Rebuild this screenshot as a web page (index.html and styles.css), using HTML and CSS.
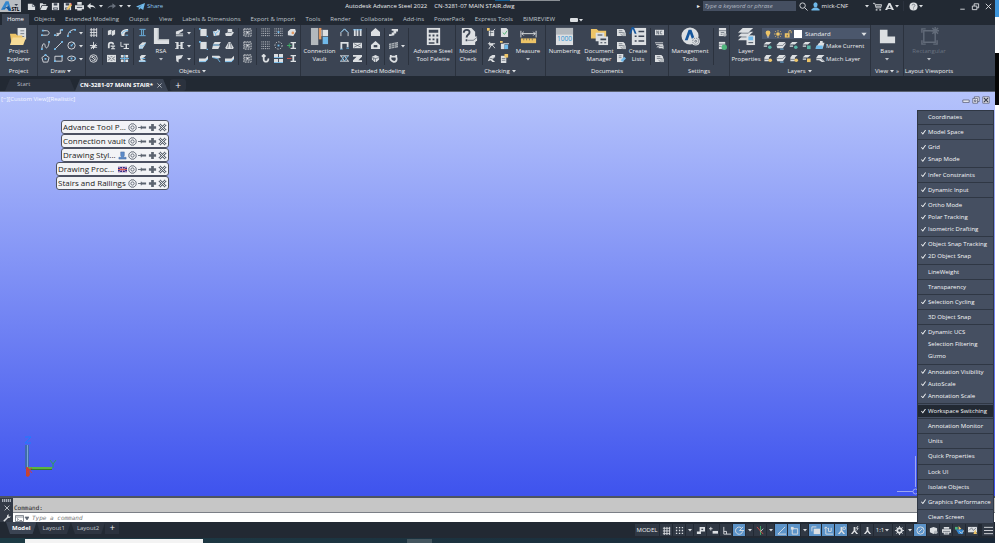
FILE: index.html
```html
<!DOCTYPE html>
<html lang="en">
<head>
    <meta charset="UTF-8">
    <meta name="viewport" content="width=device-width, initial-scale=1.0">
    <title>Autodesk Advance Steel 2022 - CN-3281-07 MAIN STAIR.dwg</title>
    <link rel="stylesheet" href="styles.css">
</head>
<body>
    <!-- Icon library -->
    <svg class="defs" aria-hidden="true">
        <symbol id="caret" viewBox="0 0 6 6"><path class="w" d="M1 2h4L3 4.500z"/></symbol>
        <symbol id="new" viewBox="0 0 10 10"><path class="w" d="M1 2h5l3 3v4H1z"/><path class="k" d="M6 2v3h3"/></symbol>
        <symbol id="open" viewBox="0 0 10 10"><path class="w" d="M1 1.500h3l1 1h3v1H3L1 8z"/><path class="w" d="M3.500 4.500H10L8 9H1.500z"/></symbol>
        <symbol id="save" viewBox="0 0 10 10"><path class="w" d="M1 1h8v8H1z"/><path class="d" d="M3 1.500h4v2.500H3zM2.500 6h5v2.500h-5z"/><path class="w" d="M3.500 7h3v1h-3z"/></symbol>
        <symbol id="saveas" viewBox="0 0 10 10"><use href="#save"/><path class="y" d="M4 9l1-3 3-4 2 1.500L6.500 8z"/><path class="r" d="M8 2l1-1 1 1.500-.5 1z"/></symbol>
        <symbol id="print" viewBox="0 0 10 10"><path class="w" d="M2.500 0h5v3h-5zM0 3.500h10V8H0z"/><path class="d" d="M2 5.500h6v1H2z"/><path class="w" d="M2.500 7h5v2.500h-5z"/></symbol>
        <symbol id="undo" viewBox="0 0 10 10"><path class="w" d="M0 4.500L4 1v2.200c3 0 5 1.500 5.500 4.300C8 5.700 6.500 5.500 4 5.600V8z"/></symbol>
        <symbol id="redo" viewBox="0 0 10 10"><path class="g" d="M10 4.500L6 1.500v2C3 3.500 1 5 .5 7.500 2 5.700 3.500 5.300 6 5.400v2z"/></symbol>
        <symbol id="share" viewBox="0 0 10 10"><path class="b" d="M0 5l10-4-2 8-3-2-2 2V6.500L7 3 2.500 6z"/></symbol>
        <symbol id="search" viewBox="0 0 10 10"><circle class="lw" cx="4" cy="4" r="3"/><path class="lw" d="M6.200 6.200L9.500 9.500"/></symbol>
        <symbol id="user" viewBox="0 0 10 10"><ellipse class="b" cx="5" cy="3" rx="2.300" ry="2.800"/><path class="b" d="M.5 9.500V8l3-2h3l3 2v1.500z"/></symbol>
        <symbol id="cart" viewBox="0 0 10 10"><path class="lw" d="M0 1.500h2l1.500 5H8.500L9.500 3H3M3.500 4.700h5"/><path class="w" d="M3 8h2v1.500H3zM7 8h2v1.500H7z"/></symbol>
        <symbol id="adesk" viewBox="0 0 10 10"><path class="w" d="M4 1h2l4 8H7.500L5 3.500 2.500 9H0z"/><path class="w" d="M3 6.500h4v1.200H3z"/></symbol>
        <symbol id="help" viewBox="0 0 10 10"><circle class="w" cx="5" cy="5" r="4.500"/><path class="ld" d="M3.400 3.800C3.500 2 6.800 2 6.600 4 6.500 5 5 5 5 6.300M5 7.200v1"/></symbol>
        <symbol id="min" viewBox="0 0 10 10"><path class="lw" d="M2.500 8h5"/></symbol>
        <symbol id="restore" viewBox="0 0 10 10"><path class="lw" d="M1.500 4.500h5v4h-5zM3.500 4.500V2h5v4.500h-2"/></symbol>
        <symbol id="close" viewBox="0 0 10 10"><path class="lw" d="M2 2l6 6M8 2L2 8"/></symbol>
        <symbol id="vmin" viewBox="0 0 10 10"><path class="vb" d="M1 5h8v3H1z"/></symbol>
        <symbol id="vrestore" viewBox="0 0 10 10"><path class="vb" d="M3 1h6v6H3z"/><path class="vb" d="M1 3h6v6H1z"/><path class="vb" d="M3 5h2v2H3z"/></symbol>
        <symbol id="vclose" viewBox="0 0 10 10"><path class="vb" d="M1 1h8v8H1z"/><path class="vx" d="M2.500 2.500l5 5M7.500 2.500l-5 5"/></symbol>

        <!-- Draw -->
        <symbol id="pline" viewBox="0 0 10 10"><path class="lw" d="M1 8h5c4 0 4-5 0-5H2"/><path class="b" d="M0 7h2v2H0zM1 2h2v2H1z"/></symbol>
        <symbol id="line3d" viewBox="0 0 10 10"><path class="lw" d="M1 8h4l-2-2h4V2h2"/><path class="b" d="M0 7h2v2H0zM8 1h2v2H8z"/><path class="lw" d="M3 9l5-4"/></symbol>
        <symbol id="arc" viewBox="0 0 10 10"><path class="lw" d="M1 9C1 5 4 2 9 1.500"/><path class="b" d="M0 8h2v2H0zM8 1h2v2H8zM2.500 3.500h2v2h-2z"/></symbol>
        <symbol id="spline" viewBox="0 0 10 10"><path class="lw" d="M1 9C1 3 4 1 4.500 5S8 9 9 1"/><path class="b" d="M0 8h2v2H0zM8 0h2v2H8z"/></symbol>
        <symbol id="line" viewBox="0 0 10 10"><path class="lw" d="M1 9l8-8"/><path class="b" d="M0 8h2v2H0zM8 0h2v2H8z"/></symbol>
        <symbol id="circle" viewBox="0 0 10 10"><circle class="lw" cx="5" cy="5" r="4"/><path class="lb" d="M5 5l3-3"/><path class="b" d="M4 4h2v2H4z"/></symbol>
        <symbol id="polygon" viewBox="0 0 10 10"><path class="lw" d="M5 1l4 3-1.500 5h-5L1 4z"/><path class="b" d="M4 4.500h2v2H4zM4 0h2v2H4z"/></symbol>
        <symbol id="rect" viewBox="0 0 10 10"><path class="lw" d="M1 2.500h8v5.500H1z"/><path class="b" d="M0 7h2v2H0zM8 1.500h2v2H8z"/></symbol>
        <symbol id="ellipse" viewBox="0 0 10 10"><ellipse class="lw" cx="5" cy="5" rx="4.300" ry="2.700"/><path class="b" d="M4 4h2v2H4zM8.500 4H10v2H8.500z"/></symbol>

        <!-- Objects -->
        <symbol id="gridlines" viewBox="0 0 10 10"><path class="lw" d="M1 2h8M1 5h8M1 8h8M2.500 0v10M5.500 0v10M8.500 0v10"/></symbol>
        <symbol id="level" viewBox="0 0 10 10"><path class="lw" d="M1 5h8M5 1v8M2 9l6-6M2 7h7"/><path class="w" d="M3 5h5L5 9z"/></symbol>
        <symbol id="compass" viewBox="0 0 10 10"><circle class="lw" cx="5" cy="5" r="4.200"/><path class="lw" d="M3 3l4 4M3 6c1 2 4 2 4-1S3 2 3 4"/></symbol>
        <symbol id="solid" viewBox="0 0 10 10"><path class="w" d="M1 3l3-1 2 1 3-1v5L6 9 5 7 1 8z"/><path class="ld" d="M5 3v4"/></symbol>
        <symbol id="curved" viewBox="0 0 10 10"><path class="w" d="M1 6c0-3 3-5 8-5v3C6 4 5 5 5 9H2z"/><path class="lb" d="M2 6.500c1-2.500 3-3.500 7-3.800M6 8h3"/></symbol>
        <symbol id="bend" viewBox="0 0 10 10"><path class="lw2" d="M2 8V4c0-3 5-3 5 0"/><path class="w" d="M4 5h5v1.300H7.300V8H9v1.200H4.500V8H6V6.300H4z"/></symbol>
        <symbol id="ibranch" viewBox="0 0 10 10"><path class="lw" d="M1 1v5h3"/><path class="w" d="M4 3h6v1.300H7.800v3.400H10V9H4V7.700h2.200V4.300H4z"/></symbol>
        <symbol id="joinA" viewBox="0 0 10 10"><path class="w" d="M0 1h10v8H0z"/><path class="ld" d="M1 3l3 2-3 2M9 3L6 5l3 2M4 3h2M4 7h2"/></symbol>
        <symbol id="joinB" viewBox="0 0 10 10"><path class="w" d="M1 1h3v3H1zM6 1h3v3H6zM1 6h3v3H1zM6 6h3v3H6z"/><path class="lb" d="M0 5h10M5 1v8"/></symbol>
        <symbol id="ibeam" viewBox="0 0 10 10"><path class="lb" d="M1.500 1.500h7M1.500 8.500h7M4 2v6M6 2v6"/></symbol>
        <symbol id="beam" viewBox="0 0 10 10"><path class="w" d="M1 5l4-3.500h4L8 4 5 8.500H1z"/><path class="lb" d="M2 5.500h4l2.500-3M2 8h3"/></symbol>
        <symbol id="beamc" viewBox="0 0 10 10"><path class="w" d="M2 3l2-2h5L7 3.500h-.5L5 6l3 1v2H1V7h2z"/><path class="lb" d="M1 8h8M4 5h4"/></symbol>
        <symbol id="rsa" viewBox="0 0 20 20"><path class="w" d="M2 1h5v12h11v5H2z"/><path class="gr" d="M6 1h1v12h11v1H6z"/></symbol>
        <symbol id="taper" viewBox="0 0 10 10"><path class="w" d="M1 4l8-3v2L4 6h5v1.300H1zM1 8h8v1.300H1z"/></symbol>
        <symbol id="hbeam" viewBox="0 0 10 10"><path class="w" d="M0 1h4v8H0V8h1.500V2H0zM6 1h4v1H8.500v6H10v1H6z"/><path class="lw" d="M3 5h4"/></symbol>
        <symbol id="folded" viewBox="0 0 10 10"><path class="w" d="M1 2l8-1-2 4-3 1v3.500L1.500 8z"/></symbol>
        <symbol id="plate" viewBox="0 0 10 10"><path class="w" d="M1.500 1h7v8h-7z"/><path class="b" d="M0 0h2v2H0zM8.500 8.500H10V10H8.500z"/></symbol>
        <symbol id="platep" viewBox="0 0 10 10"><path class="w" d="M1 4l4-1 1-2 3 2-1 5-6 1z"/><path class="lb" d="M1 4l3 2 5-4M4 6v3"/></symbol>
        <symbol id="fold" viewBox="0 0 10 10"><path class="w" d="M3 1h5v3l2 1-3 4H1L0 6l3-1z"/><path class="ld" d="M3 5h4l1-1"/></symbol>
        <symbol id="plates" viewBox="0 0 10 10"><path class="w" d="M3 1h7L8 4H1zM1 5h8L7 9H0z"/><path class="lb" d="M1 4.500h7"/></symbol>
        <symbol id="cone" viewBox="0 0 10 10"><path class="w" d="M4 1h2l4 7H0zM1 8h8v1H1z"/><path class="ld" d="M4.500 2L3 8M6 2l1 6"/></symbol>
        <symbol id="slab" viewBox="0 0 10 10"><path class="w" d="M0 5h7l3-3v4L7 9H0z"/><path class="lb" d="M0 8.500h7l3-3"/></symbol>
        <symbol id="bendplate" viewBox="0 0 10 10"><path class="w" d="M0 2h8l2 2-3 1-7-1z"/><path class="lb" d="M1 4l5 1 3 4"/></symbol>
        <symbol id="checker" viewBox="0 0 10 10"><path class="lw" d="M1 1h8v8H1z" stroke-dasharray="2 1"/><path class="lw" d="M1 4h8M1 6.500h8M3.500 1v8M6.500 1v8" stroke-dasharray="1 1"/><path class="w" d="M4 4h2v2H4z"/></symbol>
        <symbol id="dots" viewBox="0 0 10 10"><path class="lw" d="M.5 1h9M.5 3.500h9M.5 6h9M.5 8.500h9" stroke-dasharray="1 1"/></symbol>
        <symbol id="dotsb" viewBox="0 0 10 10"><use href="#dots"/><path class="b" d="M4 3.500h2v2H4z"/></symbol>
        <symbol id="ring" viewBox="0 0 10 10"><circle class="lw" cx="5" cy="5" r="4" stroke-dasharray="1.500 1.500"/><path class="b" d="M4 4h2v2H4z"/></symbol>
        <symbol id="hook" viewBox="0 0 10 10"><path class="lw2" d="M3 1v5c0 4 6 3 5-1M1 3l2-2 2 2"/></symbol>
        <symbol id="tiles" viewBox="0 0 10 10"><path class="w" d="M0 0h4.500v4.500H0zM5.500 0H10v4.500H5.500zM0 5.500h4.500V10H0zM5.500 5.500H10V10H5.500z"/><path class="lb" d="M0 4h10M0 9.500h10"/></symbol>
        <symbol id="weld" viewBox="0 0 10 10"><path class="w" d="M1 4l3-3h5l1 3-3 5-6-1z"/><circle class="o" cx="6.500" cy="5.500" r="1.500"/></symbol>
        <symbol id="addcon" viewBox="0 0 10 10"><path class="w" d="M4 1h6v1.500H8v5h2V9H4V7.500h2v-5H4z"/><path class="lgn" d="M0 5h5M2.500 2.500v5"/></symbol>
        <symbol id="remcon" viewBox="0 0 10 10"><path class="w" d="M4 1h6v1.500H8v5h2V9H4V7.500h2v-5H4z"/><path class="lr" d="M0 5h5"/></symbol>

        <!-- Extended modeling -->
        <symbol id="vault" viewBox="0 0 20 20"><path class="gr" d="M1 1h8v18H1z"/><path class="o" d="M9 1h3v12H9z"/><path class="w" d="M12 3h7v7h-7z"/><path class="b" d="M13 10h6v8h-6z"/><path class="ld" d="M9 1v18M12 10h7M13 3v15"/></symbol>
        <symbol id="portal" viewBox="0 0 10 10"><path class="lw" d="M1 9V5l4-4 4 4v4"/><path class="lb" d="M1 5l4-4 4 4"/></symbol>
        <symbol id="cols" viewBox="0 0 10 10"><path class="lw2" d="M2 1v8M5 1v8M8.500 1v8"/><path class="lb" d="M0 2h10"/></symbol>
        <symbol id="frame" viewBox="0 0 10 10"><path class="lw2" d="M1.500 9V2h7v5"/><path class="lb" d="M0 9h3M7 8h3"/></symbol>
        <symbol id="xbox" viewBox="0 0 10 10"><path class="w" d="M0 2h10v6H0z"/><path class="ld" d="M1 3l8 4M9 3L1 7"/></symbol>
        <symbol id="truss" viewBox="0 0 10 10"><path class="lw" d="M0 2h10M0 8h10M1 2l4 6M5 2l4 6"/><path class="lb" d="M5 2L1 8M9 2L5 8"/></symbol>
        <symbol id="zee" viewBox="0 0 10 10"><path class="w" d="M0 1h10v2L6 7h4v2H0V7l4-4H0z"/></symbol>
        <symbol id="house" viewBox="0 0 10 10"><path class="w" d="M5 0l5 4.500V9H0V4.500z"/></symbol>
        <symbol id="house2" viewBox="0 0 10 10"><use href="#house"/><path class="d" d="M3 4.500h4V7H3z"/></symbol>
        <symbol id="cage" viewBox="0 0 10 10"><path class="w" d="M1 3l4-2 4 2v3L6 9H4L1 6z"/><path class="ld" d="M1 4l4 1 4-1M5 5v4M3 4v3"/></symbol>
        <symbol id="stair" viewBox="0 0 10 10"><path class="w" d="M3 1h7v3H8v2H6v2L2 9H0V7h3V5h2V3H3z"/></symbol>
        <symbol id="railing" viewBox="0 0 10 10"><path class="gr" d="M0 3l10-2v6L0 9z"/><path class="ld" d="M0 5l10-2M0 7l10-2M3 2v7M6 2v6"/></symbol>
        <symbol id="handrail" viewBox="0 0 10 10"><path class="lw2" d="M2 1v2C-1 9 11 12 8 3V1M2 3h6"/></symbol>
        <symbol id="calc" viewBox="0 0 20 20"><path class="w" d="M3 1h14v18H3z"/><path class="d" d="M5 3h10v3H5zM5 8h2v2H5zM9 8h2v2H9zM13 8h2v2h-2zM5 12h2v2H5zM9 12h2v2H9zM13 12h2v5h-2zM5 16h6v1.500H5z"/></symbol>

        <!-- Checking -->
        <symbol id="mcheck" viewBox="0 0 20 20"><path class="w" d="M3 1h10l4 4v14H3z"/><path class="ld2" d="M5 6c0-4 7-4 6 0 0 2-3 2-3 5M8 13v2"/><path class="w" d="M9 13l6-3h4v4l-5 5h-5z"/><path class="ld" d="M9 14h6l4-3"/></symbol>
        <symbol id="clash" viewBox="0 0 10 10"><path class="w" d="M2 3h6v6H2z"/><path class="y" d="M0 0h3v3H0z"/><path class="ld" d="M3 5h4M4 3v6"/><path class="lw" d="M7 3l2-2"/></symbol>
        <symbol id="okdoc" viewBox="0 0 10 10"><path class="w" d="M1 0h6l2 2v8H1z"/><path class="lgn" d="M3 5l2 2 3-4"/></symbol>
        <symbol id="cog" viewBox="0 0 10 10"><path class="lw" d="M1 3h8M3 1v4M6 3L2 9M6 5l3 3"/><path class="w" d="M3 3h4v2H3z"/></symbol>
        <symbol id="steelb" viewBox="0 0 10 10"><path class="w" d="M1 3h4v6H1z"/><path class="b" d="M5 4h4v5H5z"/><path class="y" d="M0 0h3v2H0z"/><path class="lw" d="M4 3h6"/></symbol>
        <symbol id="tape" viewBox="0 0 10 10"><path class="w" d="M3 3l3-2h3v3L6 6l3 3H6L4 7 1 8z"/><path class="ld" d="M3 5h3M6 6L9 3"/></symbol>
        <symbol id="note" viewBox="0 0 10 10"><path class="w" d="M1 2h6v8H1z"/><path class="y" d="M5 0h4v4H5z"/><path class="ld" d="M2 5h4M2 7h4"/></symbol>
        <symbol id="measure" viewBox="0 0 20 20"><path class="lw" d="M2 4v7M18 4v7M3 7h14M5 5L3 7l2 2M15 5l2 2-2 2"/><path class="y" d="M2 12h16v5H2z"/><path class="ld" d="M5 12v2M8 12v2M11 12v2M14 12v2"/></symbol>

        <!-- Documents, settings -->
        <symbol id="docmgr" viewBox="0 0 20 20"><path class="y" d="M1 2h6l2 2h8v8H1z"/><path class="w" d="M6 6h9v9H6z"/><path class="w" d="M9 10h10v9H9z"/><path class="d" d="M8 8h5v1H8zM11 12h6v2h-6zM11 16h2v1h-2zM15 16h2v1h-2z"/></symbol>
        <symbol id="sheet" viewBox="0 0 10 10"><path class="w" d="M0 1h7l2 2v6H0z"/><path class="ld" d="M2 3h4M2 5h6M4 7l3 2"/><path class="gr" d="M6 5h4v4H6z"/></symbol>
        <symbol id="sheetp" viewBox="0 0 10 10"><path class="w" d="M0 0h7v9H0z"/><path class="ld" d="M2 2h3M2 4h3"/><path class="b" d="M4 7l4-4 2 2-4 4z"/></symbol>
        <symbol id="list" viewBox="0 0 20 20"><path class="w" d="M3 1h15v18H3z"/><path class="d" d="M10 4h6v1.500h-6zM10 9h6v1.500h-6zM10 14h6v1.500h-6zM6 9h2v1.500H6zM6 14h2v1.500H6z"/><path class="nb" d="M3 0h2l3 7H6L4 2 2 7H0z"/></symbol>
        <symbol id="nc" viewBox="0 0 10 10"><path class="w" d="M0 2h10v6H0z"/><path class="ld" d="M2 7V3l2 4V3M8 3.500H6v3h2"/></symbol>
        <symbol id="dstv" viewBox="0 0 10 10"><path class="lw" d="M0 2h9M1 4h8M2 7l3-2h4v4"/><path class="w" d="M4 6h5v2H4z"/></symbol>
        <symbol id="mgmt" viewBox="0 0 20 20"><circle class="w" cx="9.500" cy="9.500" r="9"/><path class="nb" d="M8 3h3l4 11h-3L9.500 7 7 14H4z"/><circle class="w" cx="15.500" cy="15" r="4.500"/><circle class="ld" cx="15.500" cy="15" r="3.200" stroke-dasharray="1.500 1"/><circle class="ld" cx="15.500" cy="15" r="1"/></symbol>
        <symbol id="tbl" viewBox="0 0 10 10"><path class="w" d="M1 0h8v9H1z"/><path class="ld" d="M1 3h8M3 5h4M3 7h2"/><circle class="gr" cx="7.500" cy="7.500" r="2"/></symbol>
        <symbol id="dbsync" viewBox="0 0 10 10"><path class="w" d="M1 1h7v8H1z"/><path class="ld" d="M1 3.500h7M1 6h3"/><circle class="gn" cx="7" cy="7" r="3"/></symbol>

        <!-- Layers -->
        <symbol id="layers" viewBox="0 0 20 20"><path class="w" d="M6 1h11l-5 5H1zM6 5h11l-5 5H1zM6 9h11l-5 5H1z"/><path class="ld" d="M1 6.500h11l4-4M1 10.500h11l4-4"/><path class="w" d="M10 9h9v10h-9z"/><path class="b" d="M12 10h5v4h-5z"/><path class="d" d="M12 16h5v1h-5z"/></symbol>
        <symbol id="ly" viewBox="0 0 10 10"><path class="w" d="M3 1h6L6 4H0zM0 5h4v1.500H0z"/></symbol>
        <symbol id="lya" viewBox="0 0 10 10"><use href="#ly"/><circle class="t" cx="7" cy="7" r="2"/></symbol>
        <symbol id="lyb" viewBox="0 0 10 10"><path class="w" d="M3 1h7L7 4.500H0zM0 5h7l3-3v2L7 8H1z"/><path class="lb" d="M4 9h4"/></symbol>
        <symbol id="lyc" viewBox="0 0 10 10"><use href="#ly"/><path class="t" d="M5 5h4v4H5z"/></symbol>
        <symbol id="lyd" viewBox="0 0 10 10"><path class="w" d="M3 1h6L6 4v4H1V4z"/><path class="ld" d="M1 6h5"/><circle class="y" cx="7.500" cy="7" r="2"/></symbol>
        <symbol id="lye" viewBox="0 0 10 10"><use href="#ly"/><path class="y" d="M5 5h4v4H5z"/></symbol>
        <symbol id="lyf" viewBox="0 0 10 10"><path class="w" d="M4 2h6L8 8H0z"/><path class="b" d="M1 5h7v4H0z"/><path class="w" d="M5 0h3v3H5z"/></symbol>
        <symbol id="lyg" viewBox="0 0 10 10"><path class="w" d="M3 1h7L7 4v1l3 3v1H7L4 7H1V4z"/><path class="ld" d="M1 5h5l3 3"/></symbol>
        <symbol id="bulb" viewBox="0 0 10 10"><circle class="y" cx="5" cy="3.500" r="3"/><path class="y" d="M3.500 5h3v3h-3z"/><path class="w" d="M4 8h2v1.500H4z"/></symbol>
        <symbol id="sun" viewBox="0 0 10 10"><circle class="y" cx="5" cy="5" r="2.300"/><path class="ly" d="M5 0v2M5 8v2M0 5h2M8 5h2M1.500 1.500l1 1M7.500 7.500l1 1M8.500 1.500l-1 1M1.500 8.500l1-1"/></symbol>
        <symbol id="lock" viewBox="0 0 10 10"><path class="y" d="M1 4h6v5.500H1z"/><path class="ly" d="M6 4V2c0-2 3-2 3 0v2"/><path class="d" d="M3.500 6h1v2h-1z"/></symbol>
        <symbol id="base" viewBox="0 0 20 20"><path class="w" d="M2 3h8v7h8v7H2z"/></symbol>
        <symbol id="vport" viewBox="0 0 20 20"><path class="lm" d="M4 4h12v12H4zM2 6V2h4M2 14v4h4M14 18h4v-4"/><path class="lm" d="M16 0v8M12 4h8M13 1l6 6M19 1l-6 6"/></symbol>
        <symbol id="explorer" viewBox="0 0 20 20"><path class="w" d="M9 1h9v12H9z"/><path class="ld" d="M12 4h4M12 7h4M12 10h4"/><path class="y" d="M1 7h6l2 2h5v10H3z"/><path class="yl" d="M4 11h14l-3 8H1z"/></symbol>

        <!-- Palettes -->
        <symbol id="gear" viewBox="0 0 10 10"><path class="lg" d="M3.300 1h3.400L9 3.300v3.400L6.700 9H3.300L1 6.700V3.300z"/><circle class="lg" cx="5" cy="5" r="1.800"/></symbol>
        <symbol id="pin" viewBox="0 0 10 10"><path class="lg" d="M0 5h4"/><path class="sg" d="M3 3h1.200v1H9v2H4.200v1H3z"/></symbol>
        <symbol id="plus" viewBox="0 0 10 10"><path class="sg" d="M3.500 1h3v2.500H9v3H6.500V9h-3V6.500H1v-3h2.500z"/></symbol>
        <symbol id="cross" viewBox="0 0 10 10"><path class="lg2" d="M1.500 1.500l7 7M8.500 1.500l-7 7"/><path class="lwt" d="M1.500 1.500l7 7M8.500 1.500l-7 7"/></symbol>
        <symbol id="stamp" viewBox="0 0 10 10"><path class="stamp" d="M3 1h4v4L6 7h3v2H1V7h3L3 5z"/></symbol>
        <symbol id="flag" viewBox="0 0 10 10"><path class="nb2" d="M0 2h10v6H0z"/><path class="lpk" d="M0 2l10 6M10 2L0 8M0 5h10M5 2v6"/><path class="lr" d="M0 5h10"/></symbol>

        <!-- Status bar -->
        <symbol id="sgrid" viewBox="0 0 10 10"><path class="lw" d="M1 2.500h8M1 5.500h8M1 8.500h8M2.500 1v9M5.500 1v9M8.500 1v9"/></symbol>
        <symbol id="ssnap" viewBox="0 0 10 10"><path class="w" d="M1 1h1.500v1.500H1zM4.300 1h1.500v1.500H4.300zM7.500 1H9v1.500H7.500zM1 4.300h1.500v1.500H1zM4.300 4.300h1.500v1.500H4.300zM7.500 4.300H9v1.500H7.500zM1 7.500h1.500V9H1zM4.300 7.500h1.500V9H4.300zM7.500 7.500H9V9H7.500z"/></symbol>
        <symbol id="sinfer" viewBox="0 0 10 10"><path class="w" d="M4 1h6v5H5.500v3H1V6h3z"/><path class="d" d="M6 3h2v1.500H6z"/></symbol>
        <symbol id="sdyn" viewBox="0 0 10 10"><path class="lw" d="M0 3h4M2 1v4"/><path class="w" d="M4 5.500h6v3H4z"/></symbol>
        <symbol id="sortho" viewBox="0 0 10 10"><path class="lw" d="M2 1v8h8M2 6h3v3"/></symbol>
        <symbol id="spolar" viewBox="0 0 10 10"><path class="lw" d="M8.500 6A4 4 0 1 1 7 2M5 5l4-4M5 5h5"/></symbol>
        <symbol id="siso" viewBox="0 0 10 10"><path class="lgn" d="M5 0v10"/><path class="lr" d="M1 1l7 8"/><path class="lw" d="M8 3L5 6"/></symbol>
        <symbol id="strack" viewBox="0 0 10 10"><path class="lw" d="M9 1L1 9h9"/></symbol>
        <symbol id="sosnap" viewBox="0 0 10 10"><path class="lw" d="M2.500 3h6v6h-6z"/><path class="w" d="M1 1h3v3H1z"/></symbol>
        <symbol id="scycle" viewBox="0 0 10 10"><path class="w" d="M3 3h7v6H3z"/><path class="lw" d="M1 6V1h5"/></symbol>
        <symbol id="sducs" viewBox="0 0 10 10"><path class="lw" d="M2 1v8h8M0 3l2-2 2 2M5 2v4h3V2"/></symbol>
        <symbol id="sanno" viewBox="0 0 10 10"><path class="w" d="M4 1h2v4l3 4H7L5 6.500 3 9H1l3-4z"/></symbol>
        <symbol id="sannov" viewBox="0 0 10 10"><use href="#sanno"/><circle class="lw" cx="8" cy="2.500" r="1.500"/></symbol>
        <symbol id="sannoa" viewBox="0 0 10 10"><use href="#sanno"/><path class="lw" d="M9 0L7 2.500h2L7.500 5"/></symbol>
        <symbol id="sgear" viewBox="0 0 10 10"><circle class="lw2" cx="5" cy="5" r="2.500"/><path class="lw" d="M5 0v2M5 8v2M0 5h2M8 5h2M1.500 1.500l1.500 1.500M7 7l1.500 1.500M8.500 1.500L7 3M1.500 8.500L3 7"/></symbol>
        <symbol id="sperf" viewBox="0 0 10 10"><circle class="lw" cx="5" cy="5" r="4"/><path class="lw" d="M3 7l4-4"/></symbol>
        <symbol id="scube" viewBox="0 0 10 10"><path class="w" d="M1 2.500L5 1l4 1.500v4L5 9 1 7z"/><circle class="gr" cx="7.500" cy="7" r="2"/></symbol>
        <symbol id="splot" viewBox="0 0 10 10"><path class="w" d="M2 1h6v2H2zM0 3.500h10v4H0zM2 7h6v2.500H2z"/><path class="ld" d="M1 6h8M3 8h4"/></symbol>
        <symbol id="smap" viewBox="0 0 10 10"><path class="gn" d="M0 1h3v3H0z"/><path class="y" d="M4 0l3 3-3 2z"/><path class="nb3" d="M1 4h8v5H4z"/><path class="lw" d="M5 6l2 2 3-3"/></symbol>
        <symbol id="sunit" viewBox="0 0 10 10"><path class="w" d="M0 1h10v6H0z"/><path class="ld" d="M1 5l3-3 2 3 3-3"/><path class="y" d="M8 4l2 5H6z"/></symbol>
        <symbol id="smenu" viewBox="0 0 10 10"><path class="lw" d="M0 1.500h10M0 5h10M0 8.500h10"/></symbol>
        <symbol id="wrench" viewBox="0 0 10 10"><path class="lw2" d="M1 9l5-5"/><path class="w" d="M5 5V2l2-2v3h3L8 5z"/></symbol>
    </svg>

    <div class="app">
        <header class="titlebar">
            <button class="app-menu" aria-label="Application menu"><svg viewBox="0 0 22 12"><path class="nb3" d="M6 1h3l3 10H9.500L7.500 4 5 10H1z"/><path class="nb" d="M1 10l8-4 3 5H9L7 8z"/><text x="12" y="11">STL</text><path class="d" d="M15 4h4l-2 2z"/></svg></button>
            <nav class="quick">
                <button aria-label="New"><svg><use href="#new"/></svg></button>
                <button aria-label="Open"><svg><use href="#open"/></svg></button>
                <button aria-label="Save"><svg><use href="#save"/></svg></button>
                <button aria-label="Save as"><svg><use href="#saveas"/></svg></button>
                <button aria-label="Plot"><svg><use href="#print"/></svg></button>
                <button aria-label="Undo"><svg><use href="#undo"/></svg></button>
                <button class="drop" aria-label="Undo list"><svg><use href="#caret"/></svg></button>
                <button aria-label="Redo"><svg><use href="#redo"/></svg></button>
                <button class="drop" aria-label="Redo list"><svg><use href="#caret"/></svg></button>
                <button class="drop" aria-label="Customize"><svg><use href="#caret"/></svg></button>
                <a class="share" href="#share"><svg><use href="#share"/></svg>Share</a>
            </nav>
            <p class="title"><span>Autodesk Advance Steel 2022</span><span>CN-3281-07 MAIN STAIR.dwg</span></p>
            <div class="account">
                <span class="play">▸</span>
                <input class="search" type="text" placeholder="Type a keyword or phrase" aria-label="Search">
                <button aria-label="Search"><svg><use href="#search"/></svg></button>
                <button class="user"><svg><use href="#user"/></svg>mick-CNF<svg class="caret"><use href="#caret"/></svg></button>
                <button aria-label="App store"><svg><use href="#cart"/></svg></button>
                <button aria-label="Autodesk apps"><svg><use href="#adesk"/></svg><svg class="caret"><use href="#caret"/></svg></button>
                <span class="rule"></span>
                <button class="help" aria-label="Help"><svg><use href="#help"/></svg><svg class="caret"><use href="#caret"/></svg></button>
            </div>
            <div class="window-buttons">
                <button aria-label="Minimize"><svg><use href="#min"/></svg></button>
                <button aria-label="Restore"><svg><use href="#restore"/></svg></button>
                <button aria-label="Close"><svg><use href="#close"/></svg></button>
            </div>
        </header>

        <nav class="tabs">
            <a class="active" href="#home">Home</a>
            <a href="#objects">Objects</a>
            <a href="#extended">Extended Modeling</a>
            <a href="#output">Output</a>
            <a href="#view">View</a>
            <a href="#labels">Labels &amp; Dimensions</a>
            <a href="#export">Export &amp; Import</a>
            <a href="#tools">Tools</a>
            <a href="#render">Render</a>
            <a href="#collaborate">Collaborate</a>
            <a href="#addins">Add-ins</a>
            <a href="#powerpack">PowerPack</a>
            <a href="#express">Express Tools</a>
            <a href="#bimreview">BIMREVIEW</a>
            <button class="collapse" aria-label="Minimize ribbon"><span></span><svg><use href="#caret"/></svg></button>
        </nav>

        <div class="ribbon">
            <section class="panel">
                <div class="tools">
                    <button class="big w37"><svg><use href="#explorer"/></svg>Project<br>Explorer</button>
                </div>
                <h2>Project</h2>
            </section>

            <section class="panel draw">
                <div class="tools">
                    <div class="grid">
                        <button aria-label="3D polyline"><svg><use href="#pline"/></svg></button>
                        <button aria-label="Spline"><svg><use href="#spline"/></svg></button>
                        <button aria-label="Polygon"><svg><use href="#polygon"/></svg></button>
                        <button aria-label="Polyline"><svg><use href="#line3d"/></svg></button>
                        <button aria-label="Line"><svg><use href="#line"/></svg></button>
                        <button aria-label="Rectangle"><svg><use href="#rect"/></svg></button>
                        <button aria-label="Arc"><svg><use href="#arc"/></svg></button>
                        <button aria-label="Circle"><svg><use href="#circle"/></svg></button>
                        <button aria-label="Ellipse"><svg><use href="#ellipse"/></svg></button>
                    </div>
                    <div class="grid carets">
                        <button aria-label="Arc options"><svg><use href="#caret"/></svg></button>
                        <button aria-label="Circle options"><svg><use href="#caret"/></svg></button>
                        <button aria-label="Ellipse options"><svg><use href="#caret"/></svg></button>
                    </div>
                </div>
                <h2>Draw <svg><use href="#caret"/></svg></h2>
            </section>

            <section class="panel objects">
                <div class="tools">
                    <div class="grid">
                        <button aria-label="Grid"><svg><use href="#gridlines"/></svg></button>
                        <button aria-label="Level"><svg><use href="#level"/></svg></button>
                        <button aria-label="UCS"><svg><use href="#compass"/></svg></button>
                    </div>
                    <span class="rule"></span>
                    <div class="grid">
                        <button aria-label="Solid"><svg><use href="#solid"/></svg></button>
                        <button aria-label="Bend"><svg><use href="#bend"/></svg></button>
                        <button aria-label="Splice"><svg><use href="#joinA"/></svg></button>
                        <button aria-label="Curved"><svg><use href="#curved"/></svg></button>
                        <button aria-label="Branch"><svg><use href="#ibranch"/></svg></button>
                        <button aria-label="Trim"><svg><use href="#joinB"/></svg></button>
                    </div>
                    <span class="rule"></span>
                    <div class="grid">
                        <button aria-label="Column"><svg><use href="#ibeam"/></svg></button>
                        <button aria-label="Beam"><svg><use href="#beam"/></svg></button>
                        <button aria-label="Continuous beam"><svg><use href="#beamc"/></svg></button>
                    </div>
                    <button class="big w24"><svg><use href="#rsa"/></svg>RSA<svg class="caret"><use href="#caret"/></svg></button>
                    <div class="grid">
                        <button aria-label="Tapered beam"><svg><use href="#taper"/></svg></button>
                        <button aria-label="Compound beam"><svg><use href="#hbeam"/></svg></button>
                        <button aria-label="Folded beam"><svg><use href="#folded"/></svg></button>
                    </div>
                    <div class="grid carets">
                        <button aria-label="Tapered options"><svg><use href="#caret"/></svg></button>
                        <button aria-label="Compound options"><svg><use href="#caret"/></svg></button>
                        <button aria-label="Folded options"><svg><use href="#caret"/></svg></button>
                    </div>
                    <span class="rule"></span>
                    <div class="grid">
                        <button aria-label="Plate"><svg><use href="#plate"/></svg></button>
                        <button aria-label="Plate centre"><svg><use href="#plate"/></svg></button>
                        <button aria-label="Slab"><svg><use href="#slab"/></svg></button>
                        <button aria-label="Poly plate"><svg><use href="#platep"/></svg></button>
                        <button aria-label="Plates"><svg><use href="#plates"/></svg></button>
                        <button aria-label="Bent plate"><svg><use href="#bendplate"/></svg></button>
                        <button aria-label="Folded plate"><svg><use href="#fold"/></svg></button>
                        <button aria-label="Conical plate"><svg><use href="#cone"/></svg></button>
                        <button aria-label="Footing"><svg><use href="#slab"/></svg></button>
                    </div>
                    <span class="rule"></span>
                    <div class="grid">
                        <button aria-label="Grating"><svg><use href="#checker"/></svg></button>
                        <button aria-label="Variable grating"><svg><use href="#checker"/></svg></button>
                        <button aria-label="Bar grating"><svg><use href="#checker"/></svg></button>
                    </div>
                    <span class="rule"></span>
                    <div class="grid">
                        <button aria-label="Bolts"><svg><use href="#dots"/></svg></button>
                        <button aria-label="Holes"><svg><use href="#dots"/></svg></button>
                        <button aria-label="Anchor"><svg><use href="#hook"/></svg></button>
                        <button aria-label="Bolts centre"><svg><use href="#dotsb"/></svg></button>
                        <button aria-label="Bolts circle"><svg><use href="#ring"/></svg></button>
                        <button aria-label="Connection pattern"><svg><use href="#tiles"/></svg></button>
                        <button aria-label="Weld"><svg><use href="#weld"/></svg></button>
                        <button aria-label="Connect objects"><svg><use href="#addcon"/></svg></button>
                        <button aria-label="Disconnect objects"><svg><use href="#remcon"/></svg></button>
                    </div>
                </div>
                <h2>Objects <svg><use href="#caret"/></svg></h2>
            </section>

            <section class="panel">
                <div class="tools">
                    <button class="big w37"><svg><use href="#vault"/></svg>Connection<br>Vault</button>
                    <div class="grid">
                        <button aria-label="Portal frame"><svg><use href="#portal"/></svg></button>
                        <button aria-label="Frame"><svg><use href="#frame"/></svg></button>
                        <button aria-label="Truss"><svg><use href="#truss"/></svg></button>
                        <button aria-label="Columns"><svg><use href="#cols"/></svg></button>
                        <button aria-label="Bracing"><svg><use href="#xbox"/></svg></button>
                        <button aria-label="Purlins"><svg><use href="#zee"/></svg></button>
                    </div>
                    <span class="rule"></span>
                    <div class="grid">
                        <button aria-label="Building"><svg><use href="#house"/></svg></button>
                        <button aria-label="Cladding"><svg><use href="#house2"/></svg></button>
                        <button aria-label="Cage"><svg><use href="#cage"/></svg></button>
                    </div>
                    <span class="rule"></span>
                    <div class="grid">
                        <button aria-label="Stair"><svg><use href="#stair"/></svg></button>
                        <button aria-label="Railing"><svg><use href="#railing"/></svg></button>
                        <button aria-label="Handrail"><svg><use href="#handrail"/></svg></button>
                    </div>
                    <div class="grid carets">
                        <span></span>
                        <button aria-label="Railing options"><svg><use href="#caret"/></svg></button>
                    </div>
                    <span class="rule"></span>
                    <button class="big w44"><svg><use href="#calc"/></svg>Advance Steel<br>Tool Palette</button>
                </div>
                <h2>Extended Modeling</h2>
            </section>

            <section class="panel">
                <div class="tools">
                    <button class="big w24"><svg><use href="#mcheck"/></svg>Model<br>Check</button>
                    <span class="rule"></span>
                    <div class="grid">
                        <button aria-label="Clash check"><svg><use href="#clash"/></svg></button>
                        <button aria-label="Object settings"><svg><use href="#cog"/></svg></button>
                        <button aria-label="Tape"><svg><use href="#tape"/></svg></button>
                        <button aria-label="Steel check"><svg><use href="#okdoc"/></svg></button>
                        <button aria-label="Steel display"><svg><use href="#steelb"/></svg></button>
                        <button aria-label="Notes"><svg><use href="#note"/></svg></button>
                    </div>
                    <button class="big w34"><svg><use href="#measure"/></svg>Measure<svg class="caret"><use href="#caret"/></svg></button>
                </div>
                <h2>Checking <svg><use href="#caret"/></svg></h2>
            </section>

            <section class="panel documents">
                <div class="tools">
                    <button class="big w37"><svg viewBox="0 0 20 20"><path class="w" d="M1 1h18v18H1z"/><path class="gr" d="M1 1h18v7H1z"/><text class="digits" x="2" y="15">1000</text></svg>Numbering</button>
                    <button class="big w32"><svg><use href="#docmgr"/></svg>Document<br>Manager</button>
                    <div class="grid">
                        <button aria-label="Drawing styles"><svg><use href="#sheet"/></svg></button>
                        <button aria-label="Drawing processes"><svg><use href="#sheet"/></svg></button>
                        <button aria-label="Edit drawing"><svg><use href="#sheetp"/></svg></button>
                    </div>
                    <button class="big w20"><svg><use href="#list"/></svg>Create<br>Lists</button>
                    <span class="rule"></span>
                    <div class="grid">
                        <button aria-label="NC"><svg><use href="#nc"/></svg></button>
                        <button aria-label="DSTV"><svg><use href="#dstv"/></svg></button>
                        <button aria-label="BOM"><svg><use href="#sheet"/></svg></button>
                    </div>
                </div>
                <h2>Documents</h2>
            </section>

            <section class="panel">
                <div class="tools">
                    <button class="big w42"><svg><use href="#mgmt"/></svg>Management<br>Tools</button>
                    <span class="rule"></span>
                    <div class="grid">
                        <button aria-label="Tables"><svg><use href="#tbl"/></svg></button>
                        <button aria-label="Update database"><svg><use href="#dbsync"/></svg></button>
                    </div>
                </div>
                <h2>Settings</h2>
            </section>

            <section class="panel">
                <div class="tools">
                    <button class="big w32"><svg><use href="#layers"/></svg>Layer<br>Properties</button>
                    <div class="layer-tools">
                        <div class="layer-field">
                            <svg><use href="#bulb"/></svg><svg><use href="#sun"/></svg><svg><use href="#lock"/></svg><i class="swatch"></i>
                            <select aria-label="Layer"><option>Standard</option></select>
                            <svg class="caret"><use href="#caret"/></svg>
                        </div>
                        <div class="layer-row">
                            <button aria-label="Off"><svg><use href="#lya"/></svg></button>
                            <button aria-label="Isolate"><svg><use href="#lyb"/></svg></button>
                            <button aria-label="Freeze"><svg><use href="#lya"/></svg></button>
                            <button aria-label="Lock"><svg><use href="#lyc"/></svg></button>
                            <button class="text"><svg><use href="#lyf"/></svg>Make Current</button>
                        </div>
                        <div class="layer-row">
                            <button aria-label="Turn all on"><svg><use href="#lyd"/></svg></button>
                            <button aria-label="Unisolate"><svg><use href="#lyb"/></svg></button>
                            <button aria-label="Thaw all"><svg><use href="#lyd"/></svg></button>
                            <button aria-label="Unlock"><svg><use href="#lye"/></svg></button>
                            <button class="text"><svg><use href="#lyg"/></svg>Match Layer</button>
                        </div>
                    </div>
                </div>
                <h2>Layers <svg><use href="#caret"/></svg></h2>
            </section>

            <section class="panel">
                <div class="tools">
                    <button class="big w32"><svg><use href="#base"/></svg>Base<svg class="caret"><use href="#caret"/></svg></button>
                </div>
                <h2>View <svg><use href="#caret"/></svg> »</h2>
            </section>

            <section class="panel last">
                <div class="tools">
                    <button class="big w50" disabled><svg><use href="#vport"/></svg>Rectangular<svg class="caret"><use href="#caret"/></svg></button>
                </div>
                <h2>Layout Viewports</h2>
            </section>
        </div>

        <nav class="files">
            <a class="start" href="#start">Start</a>
            <a class="active" href="#drawing">CN-3281-07 MAIN STAIR*<svg><use href="#close"/></svg></a>
            <button aria-label="New drawing">+</button>
        </nav>

        <main class="workspace">
            <div class="viewport">
                <p class="view-label">[−][Custom View][Realistic]</p>
                <div class="view-buttons">
                    <button aria-label="Minimize drawing"><svg><use href="#vmin"/></svg></button>
                    <button aria-label="Restore drawing"><svg><use href="#vrestore"/></svg></button>
                    <button aria-label="Close drawing"><svg><use href="#vclose"/></svg></button>
                </div>

                <div class="palettes">
                    <div class="palette"><span>Advance Tool P...</span><svg><use href="#gear"/></svg><svg><use href="#pin"/></svg><svg><use href="#plus"/></svg><svg><use href="#cross"/></svg></div>
                    <div class="palette"><span>Connection vault</span><svg><use href="#gear"/></svg><svg><use href="#pin"/></svg><svg><use href="#plus"/></svg><svg><use href="#cross"/></svg></div>
                    <div class="palette"><span>Drawing Styl...</span><svg><use href="#stamp"/></svg><svg><use href="#gear"/></svg><svg><use href="#pin"/></svg><svg><use href="#plus"/></svg><svg><use href="#cross"/></svg></div>
                    <div class="palette wide"><span>Drawing Proc...</span><svg><use href="#flag"/></svg><svg><use href="#gear"/></svg><svg><use href="#pin"/></svg><svg><use href="#plus"/></svg><svg><use href="#cross"/></svg></div>
                    <div class="palette wide"><span>Stairs and Railings</span><svg><use href="#gear"/></svg><svg><use href="#pin"/></svg><svg><use href="#plus"/></svg><svg><use href="#cross"/></svg></div>
                </div>

                <svg class="ucs" viewBox="0 0 40 46" aria-label="UCS icon">
                    <path class="axis-z" d="M4 12h4v24H4z"/><path class="axis-z-light" d="M6 12h1v24H6z"/>
                    <path class="axis-y" d="M7 34h24v3H7z"/><path class="axis-y-dark" d="M7 36h24v1H7z"/>
                    <path class="axis-x" d="M5 34l3 1 1 7-2 2-2-1z"/>
                    <path class="letter-z" d="M4 4h6L4 10h6"/><path class="letter-y" d="M29 27l3 4 3-4M32 31v4"/><path class="letter-x" d="M6 34l5 6M11 35l-5 4"/>
                </svg>
                <svg class="crosshair" viewBox="0 0 20 40"><path d="M0 35.500h16M18.500 0v31"/><circle cx="18.500" cy="35.500" r="2.500"/></svg>
            </div>

            <div class="command">
                <div class="command-side">
                    <span class="grip"></span>
                    <button aria-label="Close command line"><svg><use href="#close"/></svg></button>
                    <button aria-label="Customize"><svg><use href="#wrench"/></svg></button>
                </div>
                <div class="command-main">
                    <output class="history">Command:</output>
                    <div class="prompt">
                        <svg viewBox="0 0 14 8"><path d="M.5 1.500h8v6h-8zM.5 3h8M2 4.500l1.500 1L2 6.500M4.500 6.500H7"/><path class="sg" d="M10 3h4l-2 3z"/></svg>
                        <input type="text" placeholder="Type a command" aria-label="Command">
                    </div>
                </div>
            </div>

            <form class="status-menu">
                <label><input type="checkbox">Coordinates</label><hr>
                <label><input type="checkbox" checked>Model Space</label><hr>
                <label><input type="checkbox" checked>Grid</label>
                <label><input type="checkbox" checked>Snap Mode</label><hr>
                <label><input type="checkbox" checked>Infer Constraints</label><hr>
                <label><input type="checkbox" checked>Dynamic Input</label><hr>
                <label><input type="checkbox" checked>Ortho Mode</label>
                <label><input type="checkbox" checked>Polar Tracking</label>
                <label><input type="checkbox" checked>Isometric Drafting</label><hr>
                <label><input type="checkbox" checked>Object Snap Tracking</label>
                <label><input type="checkbox" checked>2D Object Snap</label><hr>
                <label><input type="checkbox">LineWeight</label><hr>
                <label><input type="checkbox">Transparency</label><hr>
                <label><input type="checkbox" checked>Selection Cycling</label><hr>
                <label><input type="checkbox">3D Object Snap</label><hr>
                <label><input type="checkbox" checked>Dynamic UCS</label>
                <label><input type="checkbox">Selection Filtering</label>
                <label><input type="checkbox">Gizmo</label><hr>
                <label><input type="checkbox" checked>Annotation Visibility</label>
                <label><input type="checkbox" checked>AutoScale</label>
                <label><input type="checkbox" checked>Annotation Scale</label><hr>
                <label class="current"><input type="checkbox" checked>Workspace Switching</label><hr>
                <label><input type="checkbox">Annotation Monitor</label><hr>
                <label><input type="checkbox">Units</label><hr>
                <label><input type="checkbox">Quick Properties</label><hr>
                <label><input type="checkbox">Lock UI</label><hr>
                <label><input type="checkbox">Isolate Objects</label><hr>
                <label><input type="checkbox" checked>Graphics Performance</label><hr>
                <label><input type="checkbox">Clean Screen</label>
            </form>
        </main>

        <footer class="statusbar">
            <nav class="layouts">
                <a class="active" href="#model">Model</a>
                <a href="#layout1">Layout1</a>
                <a href="#layout2">Layout2</a>
                <button aria-label="New layout">+</button>
            </nav>
            <div class="status">
                <button class="label">MODEL</button>
                <button aria-label="Grid"><svg><use href="#sgrid"/></svg></button>
                <button aria-label="Snap"><svg><use href="#ssnap"/></svg></button>
                <button class="drop" aria-label="Snap options"><svg><use href="#caret"/></svg></button>
                <button aria-label="Infer constraints"><svg><use href="#sinfer"/></svg></button>
                <button aria-label="Dynamic input"><svg><use href="#sdyn"/></svg></button>
                <button aria-label="Ortho"><svg><use href="#sortho"/></svg></button>
                <button class="on" aria-label="Polar"><svg><use href="#spolar"/></svg></button>
                <button class="drop" aria-label="Polar options"><svg><use href="#caret"/></svg></button>
                <button aria-label="Isometric"><svg><use href="#siso"/></svg></button>
                <button class="drop" aria-label="Isometric options"><svg><use href="#caret"/></svg></button>
                <button class="on" aria-label="Snap tracking"><svg><use href="#strack"/></svg></button>
                <button class="on" aria-label="Object snap"><svg><use href="#sosnap"/></svg></button>
                <button class="drop" aria-label="Object snap options"><svg><use href="#caret"/></svg></button>
                <button class="on" aria-label="Selection cycling"><svg><use href="#scycle"/></svg></button>
                <button class="on" aria-label="Dynamic UCS"><svg><use href="#sducs"/></svg></button>
                <button class="on" aria-label="Annotation visibility"><svg><use href="#sannov"/></svg></button>
                <button aria-label="AutoScale"><svg><use href="#sannoa"/></svg></button>
                <button aria-label="Annotation scale"><svg><use href="#sanno"/></svg></button>
                <button class="scale">1:1<svg><use href="#caret"/></svg></button>
                <button aria-label="Workspace"><svg><use href="#sgear"/></svg></button>
                <button class="drop" aria-label="Workspace options"><svg><use href="#caret"/></svg></button>
                <button class="on" aria-label="Graphics performance"><svg><use href="#sperf"/></svg></button>
                <button aria-label="Model"><svg><use href="#scube"/></svg></button>
                <button aria-label="Plot"><svg><use href="#splot"/></svg></button>
                <button aria-label="Standards"><svg><use href="#smap"/></svg></button>
                <button aria-label="Monitor"><svg><use href="#sunit"/></svg></button>
                <button class="customize" aria-label="Customization"><svg><use href="#smenu"/></svg></button>
            </div>
        </footer>
        <div class="taskbar"><span class="task-search"></span><span class="task-active"></span></div>
    </div>

    <!-- Windows showing behind the application -->
    <div class="desktop"><span class="sky"></span><span class="paper"></span><span class="dark"></span></div>
</body>
</html>
```
FILE: styles.css
```css
* {
    margin: 0;
    padding: 0;
    box-sizing: border-box;
}

body {
    display: flex;
    min-height: 100vh;
    overflow: hidden;
    font-family: "Open Sans", "Noto Sans", sans-serif;
    font-size: 6px;
    line-height: 8px;
    color: #eceef1;
    background: #222933;
}

button,
input,
select {
    font: inherit;
    color: inherit;
    background: none;
    border: none;
    outline: none;
}

button {
    display: flex;
    align-items: center;
    justify-content: center;
    white-space: nowrap;
}

a {
    color: inherit;
    text-decoration: none;
}

svg {
    display: block;
    flex: none;
    width: 10px;
    height: 10px;
}

.defs {
    position: absolute;
    width: 0;
    height: 0;
}

/* Icon colours */
.w { fill: #dcdfe2; }
.d { fill: #3b4453; }
.g { fill: #6a727e; }
.gr { fill: #b3b8bd; }
.b { fill: #6fb9ea; }
.y { fill: #edc467; }
.yl { fill: #f7dc97; }
.r { fill: #d9534a; }
.o { fill: #e39a63; }
.t { fill: #58b5a6; }
.gn { fill: #4fb57c; }
.nb { fill: #16569c; }
.nb2 { fill: #2a2b86; }
.nb3 { fill: #3587cf; }
.sg { fill: #5c6470; }
.k, .lw, .lw2, .lb, .ld, .ld2, .lgn, .lr, .ly, .lm, .lg, .lg2, .lwt, .lpk, .vx { fill: none; }
.lw { stroke: #dcdfe2; }
.lw2 { stroke: #dcdfe2; stroke-width: 2; }
.lb { stroke: #6fb9ea; }
.ld, .k { stroke: #4b5462; stroke-width: .7; }
.ld2 { stroke: #3b4453; stroke-width: 2; }
.lgn { stroke: #43b069; }
.lr { stroke: #d9534a; }
.ly { stroke: #edc467; }
.lm { stroke: #626b79; stroke-width: 1.5; }
.lg { stroke: #5c6470; }
.lg2 { stroke: #5c6470; stroke-width: 3; }
.lwt { stroke: #f1f2f5; }
.lpk { stroke: #e9a8bd; }
.vb { fill: #eef0f8; stroke: #5a6076; }
.vx { stroke: #3d4252; stroke-width: 1.5; }
.stamp { fill: #5d8cc9; stroke: #3f6299; stroke-width: .5; }

.app {
    display: flex;
    flex: 1;
    flex-direction: column;
    min-width: 0;
}

.rule {
    width: 1px;
    align-self: stretch;
    background: #2b323e;
}

/* Title bar */
.titlebar {
    position: relative;
    display: flex;
    align-items: center;
    height: 12px;
}

.titlebar::before {
    content: "";
    position: absolute;
    top: 0;
    left: 495px;
    width: 65px;
    height: 1px;
    background: linear-gradient(90deg, #175f93 15px, #8b9095 15px);
}

.app-menu {
    width: 21px;
    height: 12px;
    background: #b9bdc2;
}

.app-menu svg {
    width: 21px;
    height: 12px;
    font-size: 5px;
    font-weight: 700;
}

.quick {
    display: flex;
    align-items: center;
    margin-left: 4px;
}

.quick button {
    width: 12px;
    height: 12px;
}

.quick svg {
    width: 9px;
    height: 9px;
}

.quick .drop {
    width: 8px;
}

.quick .drop svg,
.caret {
    width: 6px;
    height: 6px;
}

.share {
    display: flex;
    align-items: center;
    gap: 2px;
    margin-left: 3px;
    color: #8cc4ec;
}

.title {
    display: flex;
    flex: 1;
    justify-content: center;
    gap: 7px;
    white-space: nowrap;
}

.account {
    display: flex;
    align-items: center;
    gap: 3px;
    margin-right: 34px;
}

.search {
    width: 93px;
    height: 10px;
    padding: 0 2px;
    background: #454f61;
    font-style: italic;
}

.search::placeholder {
    color: #b4bac3;
}

.account svg {
    width: 9px;
    height: 9px;
}

.account .caret {
    width: 6px;
    height: 6px;
}

.account .user svg:first-child {
    margin-right: 2px;
}

.account .user .caret {
    margin-left: 16px;
}

.account .help {
    padding-left: 2px;
}

.window-buttons {
    display: flex;
    gap: 4px;
    margin-right: 2px;
}

.window-buttons svg {
    width: 9px;
    height: 9px;
}

/* Ribbon tabs */
.tabs {
    display: flex;
    align-items: stretch;
    height: 13px;
    padding: 2px 0 0 2px;
    color: #bfc4cb;
    line-height: 11px;
    white-space: nowrap;
}

.tabs a {
    padding: 0 5px;
}

.tabs .active {
    background: #3b4453;
    color: #ffffff;
}

.collapse {
    margin-left: 10px;
}

.collapse span {
    width: 8px;
    height: 4px;
    border-radius: 1px;
    background: #dcdfe2;
}

.collapse svg {
    width: 6px;
    height: 6px;
}

/* Ribbon */
.ribbon {
    display: flex;
    height: 51px;
    background: #3b4453;
}

.panel {
    display: flex;
    flex: none;
    flex-direction: column;
    justify-content: space-between;
    border-right: 1px solid #2b323e;
}

.panel.last {
    border-right: none;
}

.tools {
    display: flex;
    height: 40px;
    padding-top: 1px;
}

.draw .tools,
.objects .tools {
    padding-right: 1px;
    padding-left: 1px;
}

.objects .tools,
.documents .tools {
    padding-right: 2px;
}

.tools > .rule {
    margin: 2px 2px 0;
}

.panel h2 {
    display: flex;
    align-items: center;
    justify-content: center;
    gap: 1px;
    height: 11px;
    font-size: 6px;
    font-weight: 400;
    white-space: nowrap;
}

.panel h2 svg {
    width: 6px;
    height: 6px;
}

.grid {
    display: grid;
    grid-auto-flow: column;
    grid-template-rows: repeat(3, 13px);
    grid-auto-columns: 13px;
}

.grid svg {
    width: 9px;
    height: 9px;
}

.grid.carets {
    grid-auto-columns: 6px;
}

.carets svg {
    width: 6px;
    height: 6px;
}

.big {
    flex-direction: column;
    justify-content: flex-start;
    padding-top: 1px;
    text-align: center;
    line-height: 8px;
}

.big > svg:first-child {
    width: 19px;
    height: 19px;
    margin-bottom: 1px;
}

.big:disabled {
    color: #697280;
}

.big .caret {
    margin-top: 1px;
    opacity: .8;
}

.w20 { width: 20px; }
.w24 { width: 24px; }
.w32 { width: 32px; }
.w34 { width: 34px; }
.w37 { width: 37px; }
.w42 { width: 42px; }
.w44 { width: 44px; }
.w50 { width: 50px; }

.digits {
    fill: #2f8fd0;
    font-size: 7px;
}

.layer-tools {
    display: flex;
    flex-direction: column;
    width: 108px;
    padding-top: 2px;
}

.layer-field {
    display: flex;
    align-items: center;
    gap: 2px;
    height: 11px;
    padding: 0 2px;
    background: #4b576c;
}

.layer-field svg {
    width: 8px;
    height: 8px;
}

.layer-field select {
    flex: 1;
    height: 11px;
    padding-left: 1px;
    appearance: none;
}

.swatch {
    width: 8px;
    height: 8px;
    background: #ffffff;
}

.layer-row {
    display: flex;
    align-items: center;
    gap: 3px;
    height: 13px;
    padding-left: 1px;
}

.layer-row svg {
    width: 10px;
    height: 9px;
}

.layer-row .text {
    gap: 1px;
}

/* Drawing tabs */
.files {
    display: flex;
    align-items: stretch;
    height: 16px;
    padding: 3px 0 0 5px;
    border-bottom: 1px solid #596170;
    line-height: 11px;
}

.files a {
    background: #2b323e;
    clip-path: polygon(5px 0, calc(100% - 5px) 0, 100% 100%, 0 100%);
}

.files .start {
    width: 70px;
    padding-left: 12px;
    color: #b5bac2;
}

.files .active {
    display: flex;
    align-items: center;
    gap: 3px;
    padding: 0 5px;
    background: #3b4453;
    color: #ffffff;
    font-weight: 700;
}

.files svg {
    width: 7px;
    height: 7px;
}

.files button {
    width: 16px;
    height: 12px;
    margin-left: 2px;
    border-radius: 3px;
    background: #2b323e;
    font-size: 10px;
}

/* Model area */
.workspace {
    position: relative;
    display: flex;
    flex: 1;
    flex-direction: column;
}

.viewport {
    position: relative;
    flex: 1;
    background: linear-gradient(#b5c3fb, #3e53ee);
}

.view-label {
    padding: 3px 1px;
    color: #f4f6ff;
}

.view-buttons {
    position: absolute;
    top: 4px;
    right: 5px;
    display: flex;
    gap: 2px;
}

.view-buttons svg {
    width: 8px;
    height: 8px;
}

.palettes {
    position: absolute;
    top: 28px;
    left: 56px;
    display: flex;
    flex-direction: column;
    align-items: flex-end;
    width: 113px;
}

.palette {
    display: flex;
    align-items: center;
    gap: 1px;
    width: 108px;
    height: 14px;
    padding: 0 1px;
    border: 1px solid #4c5162;
    border-radius: 3px;
    background: #f2f3f6;
    color: #222222;
    font-size: 8px;
    white-space: nowrap;
}

.palette.wide {
    width: 113px;
}

.palette span {
    flex: 1;
    min-width: 0;
}

.palette svg {
    width: 9px;
    height: 9px;
}

.ucs {
    position: absolute;
    bottom: 17px;
    left: 21px;
    width: 40px;
    height: 46px;
}

.axis-z { fill: #3f6cab; }
.axis-z-light { fill: #7ba7d6; }
.axis-y { fill: #5bb53f; }
.axis-y-dark { fill: #35772c; }
.axis-x { fill: #c9442f; }
.letter-z { fill: none; stroke: #1c7cff; }
.letter-y { fill: none; stroke: #2fa05c; }
.letter-x { fill: none; stroke: #d13a45; }

.crosshair {
    position: absolute;
    right: 78px;
    bottom: 0;
    width: 20px;
    height: 40px;
    fill: none;
    stroke: #9aa5f2;
}

/* Command line */
.command {
    display: flex;
    height: 26px;
    border-top: 2px solid #4d5461;
    font-family: "DejaVu Sans Mono", monospace;
}

.command-side {
    display: flex;
    flex-direction: column;
    align-items: center;
    justify-content: space-between;
    width: 13px;
    background: #333a46;
}

.command-side svg {
    width: 8px;
    height: 8px;
}

.grip {
    width: 9px;
    height: 3px;
    margin-top: 1px;
    background: repeating-linear-gradient(90deg, #a8adb5 0 1px, #5b6370 1px 2px);
}

.command-main {
    display: flex;
    flex: 1;
    flex-direction: column;
    background: #ffffff;
}

.history {
    flex: 1;
    padding: 6px 1px 0;
    border-bottom: 1px solid #7b7f86;
    background: #c6c6c6;
    color: #222222;
}

.prompt {
    display: flex;
    align-items: center;
    gap: 3px;
    height: 9px;
    padding-left: 2px;
    color: #555555;
}

.prompt svg {
    width: 14px;
    height: 8px;
    fill: none;
    stroke: #5c6470;
    stroke-width: .7;
}

.prompt .sg {
    fill: #5c6470;
}

.prompt input {
    flex: 1;
    height: 8px;
    font-style: italic;
}

.prompt input::placeholder {
    color: #777777;
}

/* Status bar menu */
.status-menu {
    position: absolute;
    top: 18px;
    right: 1px;
    bottom: -2px;
    z-index: 1;
    display: flex;
    flex-direction: column;
    width: 77px;
    border: 1px solid #2f3744;
    background: #454f61;
    color: #f6f7f9;
}

.status-menu label {
    display: flex;
    flex: 1;
    align-items: center;
    min-height: 0;
    padding-left: 3px;
    line-height: 8px;
    white-space: nowrap;
}

.status-menu hr {
    height: 1px;
    margin: 1px 0;
    border: none;
    background: #2f3744;
}

.status-menu .current {
    background: #222933;
}

.status-menu input {
    width: 5px;
    height: 5px;
    margin-right: 2px;
    appearance: none;
}

.status-menu input:checked {
    background: #f0f2f4;
    clip-path: polygon(0 55%, 15% 45%, 35% 70%, 85% 0, 100% 10%, 38% 100%);
}

/* Layout tabs and status bar */
.statusbar {
    display: flex;
    justify-content: space-between;
    height: 16px;
}

.layouts {
    display: flex;
    align-items: flex-start;
    padding-left: 6px;
    line-height: 12px;
}

.layouts a {
    padding: 0 6px;
    background: #2e3541;
    color: #c5c9cf;
    clip-path: polygon(0 0, 100% 0, calc(100% - 4px) 100%, 4px 100%);
}

.layouts .active {
    background: #3b4453;
    color: #ffffff;
    font-weight: 700;
}

.layouts button {
    width: 14px;
    height: 12px;
    background: #2b323e;
    font-size: 9px;
}

.status {
    display: flex;
    align-items: center;
    gap: 1px;
    padding-right: 1px;
}

.status button {
    width: 12px;
    height: 12px;
    background: #303844;
}

.status svg {
    width: 9px;
    height: 9px;
}

.status .label {
    width: 24px;
}

.status .drop {
    width: 7px;
}

.status .drop svg,
.status .scale svg {
    width: 6px;
    height: 6px;
}

.status .scale {
    width: 18px;
}

.status .on {
    background: #5c93c8;
}

.status .customize {
    margin-left: 3px;
}

/* Operating system task bar and the desktop behind */
.taskbar {
    display: flex;
    height: 5px;
    padding: 1px 0 0 25px;
    background: linear-gradient(90deg, #1d3b45, #1a2838);
}

.task-search {
    width: 178px;
    background: #f3f3f3;
}

.task-active {
    width: 25px;
    margin-left: 204px;
    background: #44565f;
}

.desktop {
    display: flex;
    flex-direction: column;
    width: 4px;
    background: #ffffff;
}

.sky {
    height: 17px;
    background: #3f97dd;
}

.paper {
    height: 36px;
}

.dark {
    height: 52px;
    background: #060606;
}
```
